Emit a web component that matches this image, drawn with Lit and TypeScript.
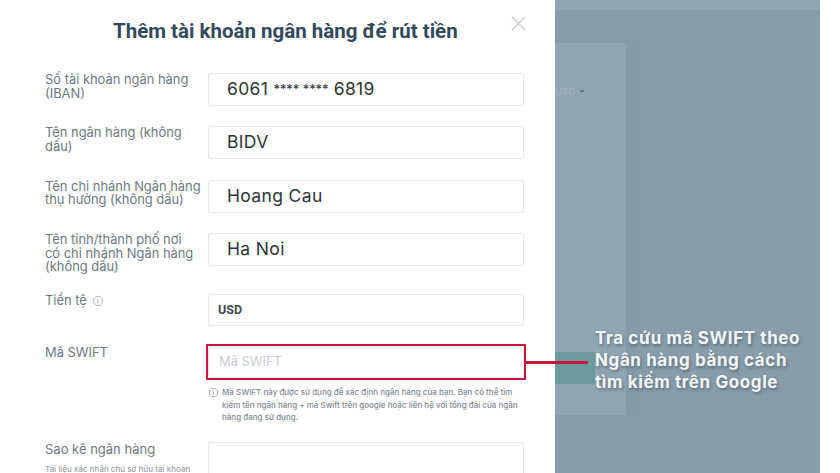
import { LitElement, html, css } from "lit";
import { customElement } from "lit/decorators.js";

const info = html`<svg class="info" viewBox="0 0 12 12" aria-hidden="true"><circle cx="6" cy="6" r="4.6" fill="none" stroke="currentColor" stroke-width="0.8"/><path d="M6 5.3v3.2M6 3.4v1" fill="none" stroke="currentColor" stroke-width="0.9"/></svg>`;

@customElement("app-root")
export class AppRoot extends LitElement {
  static styles = css`
    :host { display: block; width: 840px; height: 473px; overflow: hidden; background: #fff; font-family: Inter, "Liberation Sans", sans-serif; }
    .page { position: relative; display: flex; width: 840px; height: 473px; overflow: hidden; }
    .modal { width: 555px; flex: none; height: 473px; box-sizing: border-box; padding: 0 31px 0 45px; overflow: hidden; background: #fff; }
    .head { display: flex; height: 73px; box-sizing: border-box; padding-top: 19px; position: relative; }
    h1 { margin: 0 0 0 68px; font: 700 20.5px/24px Roboto, sans-serif; color: #34495c; white-space: nowrap; }
    .close { position: absolute; left: 465.5px; top: 15.5px; width: 15px; height: 15px; color: #c4cbd0; }
    .row { display: grid; grid-template-columns: 163px 316px; margin-bottom: 20.4px; }
    .label { font-size: 12.9px; line-height: 13.5px; color: #6e7a84; white-space: nowrap; }
    .inline-info { display: inline-block; width: 12px; height: 12px; vertical-align: -2px; color: #9aa3aa; margin-left: 2px; }
    .info { display: block; width: 100%; height: 100%; }
    .input { height: 33px; box-sizing: border-box; border: 1px solid #e6e9ec; border-radius: 2px; display: flex; align-items: center; padding: 0 0 2px 18px; font-size: 17.5px; color: #2f3338; background: #fff; white-space: nowrap; letter-spacing: 0.35px; }
    .stars { font-size: 13px; letter-spacing: -0.1px; white-space: pre; }
    .input.small { padding: 0 0 1px 9px; font: 700 12.5px Roboto, sans-serif; color: #3e4b57; letter-spacing: 0; height: 32px; }
    .input.placeholder { padding: 0 0 1px 10px; font-size: 12.9px; color: #c9ced3; letter-spacing: 0; height: 32px; }
    .swift-wrap { position: relative; }
    .highlight { position: absolute; left: -2px; top: -2px; width: 320px; height: 36px; box-sizing: border-box; border: 2.5px solid #c8173f; }
    .hint { display: flex; gap: 3px; margin-top: 8px; font-size: 8px; line-height: 12.5px; color: #7f8a94; font-weight: 500; width: 315px; }
    .hint .ic { width: 11px; height: 11px; flex: none; color: #7f8a94; margin-top: 1px; }
    .swift-row { margin-bottom: 18px; }
    .sub { margin-top: 7px; font-size: 8px; line-height: 12px; color: #98a1a9; white-space: nowrap; font-weight: 500; }
    .statement { font-size: 13px; line-height: 14px; color: #6e7a84; }
    .box { height: 60px; border: 1px solid #e6e9ec; border-radius: 2px; box-sizing: border-box; width: 316px; }
    .backdrop { width: 265px; flex: none; height: 473px; display: flex; flex-direction: column; background: #879dab; box-shadow: inset 1px 0 0 #7f95a3; }
    .band { height: 10px; flex: none; background: #8fa5b1; }
    .under { display: flex; margin-top: 33px; height: 372px; }
    .panel { width: 71px; height: 100%; background: #8fa5b1; display: flex; flex-direction: column; box-sizing: border-box; padding-top: 29px; box-shadow: 10px 0 8px rgba(125, 148, 175, 0.22); }
    .currency { height: 38px; width: 39px; box-sizing: border-box; border: 1px solid #8ea3af; border-left: 0; border-right: 1px solid #8ba1ad; display: flex; align-items: center; gap: 4px; font-size: 9.5px; color: #a6b6c0; }
    .caret { width: 0; height: 0; border: 3px solid transparent; border-top: 3px solid #5f7381; margin-top: 3px; }
    .ghost { margin-top: 160px; height: 33px; width: 39px; border: 1px solid #8ea3af; border-left: 0; box-sizing: border-box; }
    .teal { margin-top: 49px; height: 32px; width: 40px; background: #6c9b9c; }
    .right { flex: 1; background: #fff; }
    .connector { position: absolute; left: 526px; top: 361px; width: 62px; height: 2.5px; background: #c8173f; }
    .callout { position: absolute; left: 595px; top: 327px; font: 700 17px/22px Inter, sans-serif; letter-spacing: 0.6px; color: #f4f6f7; text-shadow: 1px 2px 3px rgba(50, 65, 80, 0.5); white-space: nowrap; }
  `;

  render() {
    return html`
      <div class="page">
        <div class="modal">
          <div class="head">
            <h1>Thêm tài khoản ngân hàng để rút tiền</h1>
            <svg class="close" viewBox="0 0 15 15" aria-hidden="true"><path d="M1 1l13 13M14 1L1 14" fill="none" stroke="currentColor" stroke-width="1.3"/></svg>
          </div>
          <div class="row"><div class="label">Số tài khoản ngân hàng<br />(IBAN)</div><div class="input">6061&nbsp;<span class="stars">**** ****</span>&nbsp;6819</div></div>
          <div class="row"><div class="label">Tên ngân hàng (không<br />dấu)</div><div class="input">BIDV</div></div>
          <div class="row"><div class="label">Tên chi nhánh Ngân hàng<br />thụ hưởng (không dấu)</div><div class="input">Hoang Cau</div></div>
          <div class="row"><div class="label">Tên tỉnh/thành phố nơi<br />có chi nhánh Ngân hàng<br />(không dấu)</div><div class="input">Ha Noi</div></div>
          <div class="row"><div class="label">Tiền tệ <span class="inline-info">${info}</span></div><div class="input small">USD</div></div>
          <div class="row swift-row">
            <div class="label">Mã SWIFT</div>
            <div class="swift-wrap">
              <div class="input placeholder">Mã SWIFT</div>
              <div class="highlight"></div>
              <div class="hint"><span class="ic">${info}</span><span>Mã SWIFT này được sử dụng để xác định ngân hàng của bạn. Bạn có thể tìm kiếm tên ngân hàng + mã Swift trên google hoặc liên hệ với tổng đài của ngân hàng đang sử dụng.</span></div>
            </div>
          </div>
          <div class="row">
            <div><div class="statement">Sao kê ngân hàng</div><div class="sub">Tài liệu xác nhận chủ sở hữu tài khoản</div></div>
            <div class="box"></div>
          </div>
        </div>
        <div class="backdrop">
          <div class="band"></div>
          <div class="under">
            <div class="panel">
              <div class="currency"><span>USD</span><i class="caret"></i></div>
              <div class="ghost"></div>
              <div class="teal"></div>
            </div>
          </div>
        </div>
        <div class="right"></div>
        <div class="connector"></div>
        <div class="callout">Tra cứu mã SWIFT theo<br />Ngân hàng bằng cách<br />tìm kiếm trên Google</div>
      </div>
    `;
  }
}
